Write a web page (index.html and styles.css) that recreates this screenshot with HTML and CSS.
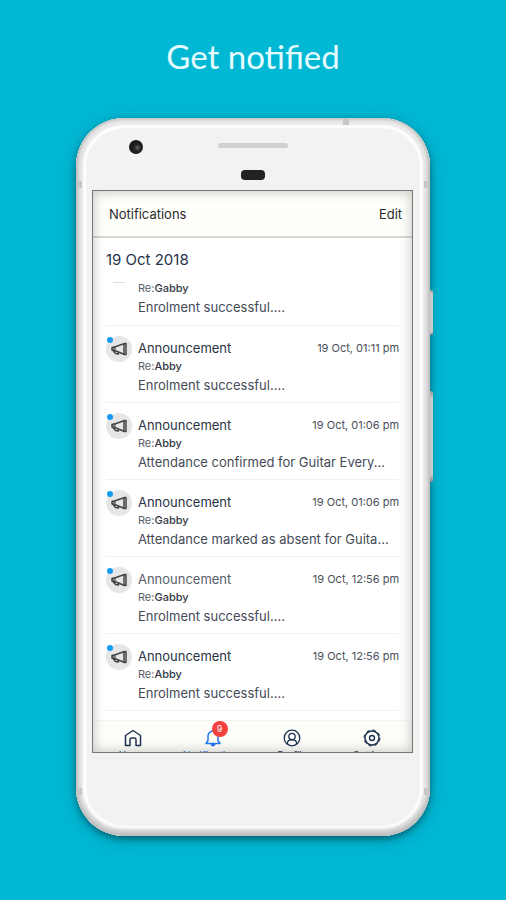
FILE: index.html
```
<!DOCTYPE html>
<html lang="en">
<head>
<meta charset="utf-8">
<meta name="viewport" content="width=device-width, initial-scale=1">
<title>Get notified</title>
<link rel="stylesheet" href="styles.css">
</head>
<body>
<svg class="sprite" aria-hidden="true">
  <symbol id="megaphone" viewBox="0 0 18 16">
    <path d="M2 6.500 6 5.500 14.500 2.500h1.500v11h-1.500L6 10l-4-1zM14 3v10M3 9.500l2.500 3 3 .5-1-2.500" fill="none" stroke="currentColor" stroke-width="1.500" stroke-linejoin="round"/>
    <path d="M2 6.500 6 5.500V10L2 9z" fill="currentColor" opacity=".6"/>
  </symbol>
</svg>
<main class="stage">
  <h1 class="headline">Get notified</h1>
  <div class="phone">
    <span class="band band-top"></span>
    <span class="band band-left-upper"></span>
    <span class="band band-right-upper"></span>
    <span class="band band-left-lower"></span>
    <span class="band band-right-lower"></span>
    <span class="key key-power"></span>
    <span class="key key-volume"></span>
    <div class="forehead">
      <span class="camera"></span>
      <span class="sensors"><span class="speaker"></span><span class="sensor"></span></span>
    </div>
    <section class="screen">
      <header class="bar">
        <h2 class="bar-title">Notifications</h2>
        <button class="edit" type="button">Edit</button>
      </header>
      <div class="feed">
        <h3 class="date">19 Oct 2018</h3>
        <ul class="list">
          <li class="item item-cut">
            <span class="sliver"></span>
            <div class="content">
              <p class="re">Re:<b>Gabby</b></p>
              <p class="message">Enrolment successful....</p>
            </div>
          </li>
          <li class="item">
            <span class="avatar"><svg class="horn"><use href="#megaphone"/></svg></span>
            <div class="content">
              <div class="top"><h4 class="kind">Announcement</h4><time class="time">19 Oct, 01:11 pm</time></div>
              <p class="re">Re:<b>Abby</b></p>
              <p class="message">Enrolment successful....</p>
            </div>
          </li>
          <li class="item">
            <span class="avatar"><svg class="horn"><use href="#megaphone"/></svg></span>
            <div class="content">
              <div class="top"><h4 class="kind">Announcement</h4><time class="time">19 Oct, 01:06 pm</time></div>
              <p class="re">Re:<b>Abby</b></p>
              <p class="message">Attendance confirmed for Guitar Every...</p>
            </div>
          </li>
          <li class="item">
            <span class="avatar"><svg class="horn"><use href="#megaphone"/></svg></span>
            <div class="content">
              <div class="top"><h4 class="kind">Announcement</h4><time class="time">19 Oct, 01:06 pm</time></div>
              <p class="re">Re:<b>Gabby</b></p>
              <p class="message">Attendance marked as absent for Guita...</p>
            </div>
          </li>
          <li class="item">
            <span class="avatar"><svg class="horn"><use href="#megaphone"/></svg></span>
            <div class="content">
              <div class="top"><h4 class="kind kind-read">Announcement</h4><time class="time">19 Oct, 12:56 pm</time></div>
              <p class="re">Re:<b>Gabby</b></p>
              <p class="message">Enrolment successful....</p>
            </div>
          </li>
          <li class="item">
            <span class="avatar"><svg class="horn"><use href="#megaphone"/></svg></span>
            <div class="content">
              <div class="top"><h4 class="kind">Announcement</h4><time class="time">19 Oct, 12:56 pm</time></div>
              <p class="re">Re:<b>Abby</b></p>
              <p class="message">Enrolment successful....</p>
            </div>
          </li>
        </ul>
      </div>
      <nav class="tabs">
        <a class="tab" href="#home">
          <svg class="glyph" viewBox="0 0 18 18"><path d="M1.500 6.500 9 1.500l7.500 5v10h-4.500v-6q0-1.500-1.500-1.500h-3q-1.500 0-1.500 1.500v6H1.500z" fill="none" stroke="currentColor" stroke-width="1.500" stroke-linejoin="round"/></svg>
          <span class="tab-label">Home</span>
        </a>
        <a class="tab tab-active" href="#notifications">
          <span class="bell">
            <svg class="glyph" viewBox="0 0 18 18"><path d="M2 14.500h14l-2-3V7a5 5 0 0 0-10 0v4.500zM9 2V.5" fill="none" stroke="currentColor" stroke-width="1.500" stroke-linejoin="round"/><path d="M6.500 15h5a2.500 2.500 0 0 1-5 0z" fill="currentColor"/></svg>
            <span class="badge">9</span>
          </span>
          <span class="tab-label">Notifications</span>
        </a>
        <a class="tab" href="#profile">
          <svg class="glyph" viewBox="0 0 18 18"><g fill="none" stroke="currentColor" stroke-width="1.300"><circle cx="9" cy="9" r="7.800"/><circle cx="9" cy="7.500" r="3.200"/><path d="M4.500 15q-.5-4.200 4.500-4.200t4.500 4.200"/></g></svg>
          <span class="tab-label">Profile</span>
        </a>
        <a class="tab" href="#settings">
          <svg class="glyph" viewBox="0 0 18 18"><g fill="none" stroke="currentColor"><circle cx="9" cy="9" r="7" stroke-width="1.500"/><circle cx="9" cy="9" r="8" stroke-width="1" stroke-dasharray="3.500 2.783"/><circle cx="9" cy="9" r="2.500" stroke-width="1.400"/></g></svg>
          <span class="tab-label">Settings</span>
        </a>
      </nav>
    </section>
  </div>
</main>
</body>
</html>
```
FILE: styles.css
```
* { box-sizing: border-box; }

body {
  margin: 0;
  min-height: 100vh;
  background: #00b8d4;
  font-family: Inter, "Liberation Sans", sans-serif;
  color: #333b49;
}

h1, h2, h3, h4, p, ul { margin: 0; padding: 0; font-weight: 400; }

.sprite { display: none; }

.stage {
  display: flex;
  flex-direction: column;
  align-items: center;
  padding: 36px 0 63px;
}

.headline {
  margin-bottom: 42px;
  font-family: Lato, sans-serif;
  font-size: 33px;
  line-height: 40px;
  color: #e6fbff;
}

.phone {
  position: relative;
  width: 70%;
  padding: 0 17px 83px 16px;
  border-radius: 48px;
  background: #f2f2f2;
  box-shadow:
    0 3px 6px rgba(0, 60, 75, .6),
    0 4px 18px rgba(0, 80, 95, .3),
    inset 0 0 3px 1px #bbb,
    inset 0 -3px 5px 2px #c2c2c2,
    inset 0 0 2px 7px #e9e9e9,
    inset 0 0 2px 10px #fff;
}

.band { position: absolute; background: #c6c6c6; }
.band-top { top: 0; right: 81px; width: 6px; height: 7px; }
.band-left-upper, .band-left-lower { left: 0; width: 6px; height: 7px; }
.band-right-upper, .band-right-lower { right: 0; width: 6px; height: 7px; }
.band-left-upper, .band-right-upper { top: 63px; }
.band-left-lower, .band-right-lower { bottom: 41px; }

.key {
  position: absolute;
  left: 100%;
  width: 3px;
  border-radius: 0 2px 2px 0;
  background: linear-gradient(#999, #ccc 8%, #ccc 92%, #888);
}
.key-power { top: 172px; height: 45px; }
.key-volume { top: 273px; height: 91px; }

.forehead {
  display: grid;
  grid-template-columns: 1fr auto 1fr;
  align-items: start;
  height: 72px;
  padding-top: 22px;
}

.camera {
  width: 14px;
  height: 14px;
  margin-left: 37px;
  border-radius: 50%;
  background: radial-gradient(circle at 60% 55%, #666 0, #222 30%, #161616 70%);
}

.sensors { display: flex; flex-direction: column; align-items: center; gap: 22px; padding-top: 3px; }
.speaker { width: 70px; height: 5px; border-radius: 3px; background: #d0d0d0; }
.sensor { width: 24px; height: 10px; border-radius: 4px; background: #222; }

.screen {
  position: relative;
  overflow: hidden;
  border: 1px solid #777;
  background: #fff;
}

.screen::after {
  content: "";
  position: absolute;
  inset: 0;
  box-shadow: inset 0 0 12px 1px rgba(60, 60, 50, .28);
  pointer-events: none;
}

.bar {
  display: flex;
  justify-content: space-between;
  align-items: center;
  height: 47px;
  padding: 0 10px 0 16px;
  border-bottom: 2px solid #d6d6d4;
  background: #fefefb;
}

.bar-title, .edit { font-size: 13px; line-height: 18px; color: #2b2b2b; }
.edit { padding: 0; border: 0; background: none; font-family: inherit; }

.feed { padding: 10px 13px 9px; }

.date { font-size: 15px; line-height: 24px; color: #26324a; }

.list { list-style: none; }

.item {
  display: flex;
  gap: 6px;
  height: 77px;
  padding-top: 13px;
  border-bottom: 1px solid #f1f1f1;
}
.item-cut { height: 54px; padding-top: 6px; }

.sliver { width: 12px; height: 1px; margin: 4px 7px 0; background: #ddd; }

.avatar {
  position: relative;
  display: grid;
  place-items: center;
  width: 26px;
  height: 26px;
  margin-top: -3px;
  border-radius: 50%;
  background: #e6e6e6;
  color: #444;
}
.avatar::before {
  content: "";
  position: absolute;
  top: 1px;
  left: 1px;
  width: 6px;
  height: 6px;
  border-radius: 50%;
  background: #159bf3;
}
.horn { width: 18px; height: 16px; }

.content { flex: 1; min-width: 0; }

.top { display: flex; justify-content: space-between; align-items: center; height: 17px; }
.kind { font-size: 13px; line-height: 16px; color: #2a3344; }
.kind-read { color: #5a606c; }
.time { font-size: 11px; line-height: 16px; color: #4a4f5a; white-space: nowrap; }
.re { font-size: 11px; line-height: 20px; color: #5b6069; }
.re b { font-weight: 500; color: #333944; }
.message { font-size: 13px; line-height: 18px; white-space: nowrap; color: #444b57; }

.tabs {
  display: grid;
  grid-template-columns: repeat(4, 1fr);
  height: 32px;
  overflow: hidden;
  border-top: 1px solid #f4f4f0;
  background: #fdfdfa;
}

.tab {
  display: flex;
  flex-direction: column;
  align-items: center;
  gap: 1px;
  padding-top: 8px;
  color: #1d3352;
  text-decoration: none;
}
.tab-active { color: #2378f0; }
.tab-label { font-size: 10px; line-height: 14px; }
.glyph { display: block; flex: none; width: 18px; height: 18px; }
.bell { position: relative; }

.badge {
  position: absolute;
  top: -8px;
  left: 8px;
  width: 16px;
  height: 16px;
  border-radius: 50%;
  background: #f2413f;
  color: #fff;
  font-size: 9px;
  line-height: 16px;
  text-align: center;
}
```
